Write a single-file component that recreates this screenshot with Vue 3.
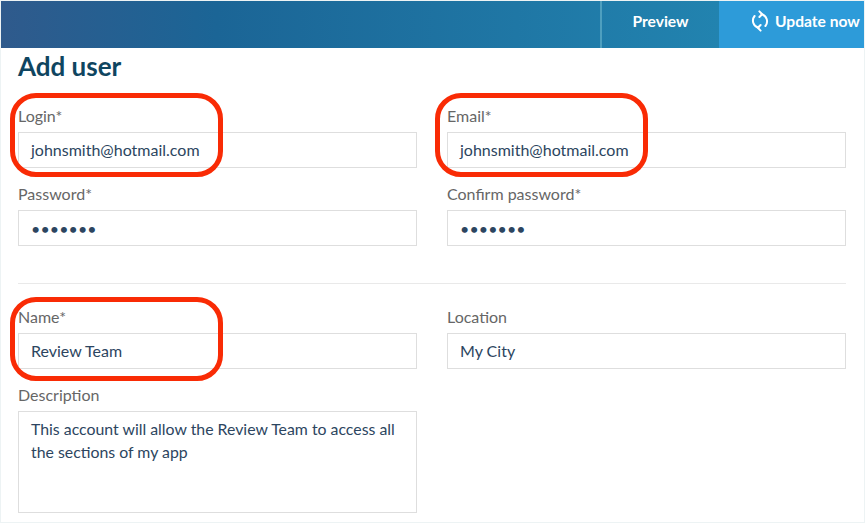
<script setup>
const top = [
  { label: 'Login*', value: 'johnsmith@hotmail.com' },
  { label: 'Email*', value: 'johnsmith@hotmail.com' },
  { label: 'Password*', value: '•••••••', secret: true },
  { label: 'Confirm password*', value: '•••••••', secret: true },
]
const bottom = [
  { label: 'Name*', value: 'Review Team' },
  { label: 'Location', value: 'My City' },
]
</script>

<template>
  <div class="page">
    <header class="bar">
      <div class="spacer"></div>
      <div class="preview">Preview</div>
      <div class="update">
        <svg class="sync" viewBox="0 0 18 22" width="18" height="22" fill="none" stroke="#fff" stroke-width="2" stroke-linecap="round" stroke-linejoin="round">
          <path d="M10.5 4.2A7.4 7.4 0 0 1 14.4 16" />
          <path d="M7.5 17.8A7.4 7.4 0 0 1 3.6 6" />
          <path d="M8.4 1.4 L11.2 4.2 L8.4 7" />
          <path d="M9.6 20.6 L6.8 17.8 L9.6 15" />
        </svg>
        <span>Update now</span>
      </div>
    </header>
    <main class="content">
      <h1>Add user</h1>
      <div class="grid">
        <div v-for="f in top" :key="f.label" class="field">
          <label>{{ f.label }}</label>
          <div class="input" :class="{ secret: f.secret }">{{ f.value }}</div>
        </div>
      </div>
      <hr />
      <div class="grid lower">
        <div v-for="f in bottom" :key="f.label" class="field">
          <label>{{ f.label }}</label>
          <div class="input">{{ f.value }}</div>
        </div>
        <div class="field">
          <label>Description</label>
          <div class="textarea">This account will allow the Review Team to access all the sections of my app</div>
        </div>
      </div>
      <div class="oval o1"></div>
      <div class="oval o2"></div>
      <div class="oval o3"></div>
    </main>
  </div>
</template>

<style>
html, body { margin: 0; background: #edf3f4; }
</style>

<style scoped>
.page {
  width: 863px;
  height: 521px;
  margin: 1px 0 0 1px;
  background: #fff;
  font-family: Lato, "Open Sans", sans-serif;
  position: relative;
  overflow: hidden;
}
.bar {
  height: 47px;
  display: flex;
  background: linear-gradient(90deg, #2f5a8c 0%, #1b6596 25%, #2284b0 85%);
  color: #fff;
  font-size: 15.6px;
  font-weight: 700;
}
.spacer { flex: 1; }
.preview {
  width: 119px;
  box-sizing: border-box;
  border-left: 2px solid #4e9fbf;
  display: flex;
  align-items: center;
  justify-content: center;
  padding-bottom: 8px;
}
.update {
  width: 145px;
  background: #2d9bd9;
  display: flex;
  align-items: center;
  padding: 0 0 8px 32px;
  box-sizing: border-box;
  gap: 6px;
  white-space: nowrap;
}
.sync { flex: none; }
.content {
  position: relative;
  padding: 0 18px 0 17px;
}
h1 {
  margin: 0;
  height: 37px;
  line-height: 36px;
  font-size: 26px;
  font-weight: 700;
  color: #0f4560;
}
.grid {
  display: grid;
  grid-template-columns: 399px 399px;
  column-gap: 30px;
  padding-top: 20px;
}
.grid.lower { padding-top: 22px; }
.field { height: 78px; }
label {
  display: block;
  height: 27px;
  line-height: 22px;
  font-size: 16px;
  color: #666;
}
.input, .textarea {
  box-sizing: border-box;
  border: 1px solid #dedede;
  color: #2c4560;
  font-size: 16px;
  padding: 0 12px;
  background: #fff;
}
.input {
  height: 36px;
  line-height: 33px;
}
.secret { letter-spacing: 0.1px; line-height: 35px; }
.textarea {
  height: 102px;
  padding-top: 5px;
  line-height: 23px;
  font-size: 15.85px;
}
hr {
  border: 0;
  border-top: 1px solid #e9e9e9;
  margin: 22px 0 0;
}
.oval {
  position: absolute;
  box-sizing: border-box;
  width: 213px;
  height: 84px;
  border: 5px solid #f92b05;
  border-radius: 26px;
  pointer-events: none;
}
.o1 { left: 9px; top: 45px; }
.o2 { left: 434px; top: 45px; }
.o3 { left: 9px; top: 249px; }
</style>
